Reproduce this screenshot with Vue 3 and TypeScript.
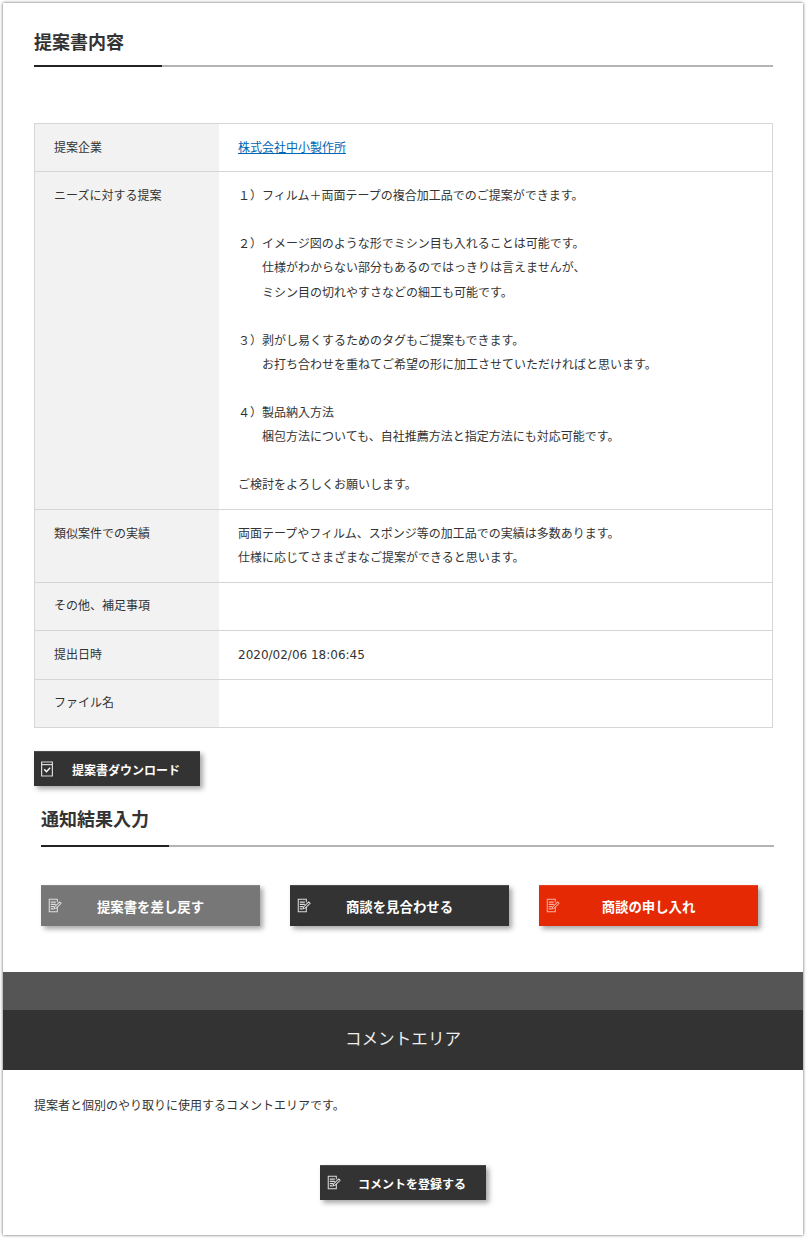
<script setup lang="ts">
interface Row { label: string; lines?: string[]; link?: string }
const rows: Row[] = [
  { label: '提案企業', link: '株式会社中小製作所' },
  { label: 'ニーズに対する提案', lines: [
    '１）フィルム＋両面テープの複合加工品でのご提案ができます。', '',
    '２）イメージ図のような形でミシン目も入れることは可能です。',
    '　　仕様がわからない部分もあるのではっきりは言えませんが、',
    '　　ミシン目の切れやすさなどの細工も可能です。', '',
    '３）剥がし易くするためのタグもご提案もできます。',
    '　　お打ち合わせを重ねてご希望の形に加工させていただければと思います。', '',
    '４）製品納入方法',
    '　　梱包方法についても、自社推薦方法と指定方法にも対応可能です。', '',
    'ご検討をよろしくお願いします。'] },
  { label: '類似案件での実績', lines: ['両面テープやフィルム、スポンジ等の加工品での実績は多数あります。', '仕様に応じてさまざまなご提案ができると思います。'] },
  { label: 'その他、補足事項', lines: [''] },
  { label: '提出日時', lines: ['2020/02/06 18:06:45'] },
  { label: 'ファイル名', lines: [''] },
]
const actions = [
  { label: '提案書を差し戻す', cls: 'gray' },
  { label: '商談を見合わせる', cls: 'dark' },
  { label: '商談の申し入れ', cls: 'red' },
]
</script>

<template>
  <div class="frame">
    <section class="content">
      <h2 class="heading">提案書内容</h2>
      <table class="info">
        <tbody>
          <tr v-for="r in rows" :key="r.label">
            <th>{{ r.label }}</th>
            <td>
              <a v-if="r.link" href="#">{{ r.link }}</a>
              <template v-else>
                <div v-for="(l, i) in r.lines" :key="i" class="line">{{ l || '\u00a0' }}</div>
              </template>
            </td>
          </tr>
        </tbody>
      </table>
      <button class="btn download" type="button">
        <svg class="ico" viewBox="0 0 14 16" width="14" height="16" fill="none" stroke="#d8d8d8" stroke-width="1.2">
          <path d="M1.6 1h10.8v14H1.6z" />
          <path d="M1.6 3.6h10.8" />
          <path d="M4.2 8.2l2.3 2.6 3.6-4" stroke="#fff" stroke-width="1.4" />
        </svg>
        <span>提案書ダウンロード</span>
      </button>
    </section>

    <section class="notify">
      <h2 class="heading">通知結果入力</h2>
      <div class="actions">
        <button v-for="a in actions" :key="a.label" class="btn action" :class="a.cls" type="button">
          <svg class="ico" viewBox="0 0 16 16" width="15" height="15" fill="none" stroke="currentColor" stroke-width="1.1">
            <path d="M11 9.5V14.6H2.4V1.4h8.6v3" />
            <path d="M4 4.4h5.4M4 6.8h5.4M4 9.2h3.6M4 11.6h3" />
            <path d="M7.6 11.6l.5-2 5.4-5.4 1.5 1.5-5.4 5.4z" />
          </svg>
          <span>{{ a.label }}</span>
        </button>
      </div>
    </section>

    <div class="band"></div>
    <h2 class="comment-title">コメントエリア</h2>
    <section class="comment">
      <p>提案者と個別のやり取りに使用するコメントエリアです。</p>
      <button class="btn submit" type="button">
        <svg class="ico" viewBox="0 0 16 16" width="15" height="15" fill="none" stroke="currentColor" stroke-width="1.1">
          <path d="M11 9.5V14.6H2.4V1.4h8.6v3" />
          <path d="M4 4.4h5.4M4 6.8h5.4M4 9.2h3.6M4 11.6h3" />
          <path d="M7.6 11.6l.5-2 5.4-5.4 1.5 1.5-5.4 5.4z" />
        </svg>
        <span>コメントを登録する</span>
      </button>
    </section>
  </div>
</template>

<style>
html, body { margin: 0; background: #fff; }
</style>

<style scoped>
.frame {
  box-sizing: border-box;
  width: 800px;
  height: 1232px;
  margin: 3px;
  background: #fff;
  box-shadow: 0 0 3px rgba(0, 0, 0, 0.65);
  color: #333;
  font-family: "DejaVu Sans", "Noto Sans CJK JP", sans-serif;
  font-size: 12px;
  overflow: hidden;
}
.content { padding: 0 30px 0 31px; }
.heading {
  margin: 0;
  height: 64px;
  box-sizing: border-box;
  padding-top: 27px;
  font-size: 18px;
  line-height: 26px;
  font-weight: 700;
  color: #333;
  border-bottom: 2px solid #b4b4b4;
  position: relative;
}
.heading::after {
  content: "";
  position: absolute;
  left: 0;
  bottom: -2px;
  width: 128px;
  height: 2px;
  background: #222;
}
.info {
  width: 739px;
  margin-top: 56px;
  border-collapse: collapse;
  table-layout: fixed;
}
.info th, .info td {
  border: 1px solid #d6d6d6;
  padding: 11.7px 19px;
  font-weight: 400;
  line-height: 24.1px;
  text-align: left;
  vertical-align: top;
}
.info th { width: 146px; background: #f2f2f2; border-right: 0; }
.info td { border-left: 0; }
.info a { color: #0066b3; }
.line { white-space: pre; }
.btn {
  display: flex;
  align-items: center;
  box-sizing: border-box;
  border: 0;
  border-top: 1px solid rgba(255,255,255,0.12);
  padding: 0;
  color: #fff;
  background: #333;
  font-family: inherit;
  font-weight: 700;
  box-shadow: 3px 3px 5px rgba(0, 0, 0, 0.35);
  position: relative;
}
.ico { position: absolute; flex: none; color: #ddd; }
.download { width: 166px; height: 35px; margin-top: 23px; font-size: 12px; }
.download .ico { left: 6px; top: 9px; }
.download span { margin-left: 38px; }
.notify { padding: 0 29px 0 38px; margin-top: -1px; }
.notify .heading { padding-top: 22px; height: 62px; }
.actions { display: flex; gap: 30px; margin-top: 38px; }
.action { width: 219px; height: 41px; justify-content: center; font-size: 13.4px; }
.action .ico { left: 6px; top: 12px; }
.gray { background: #777; }
.dark { background: #333; }
.red { background: #e62905; }
.red .ico { color: #f7b0a0; }
.band {
  height: 38px;
  margin-top: 46px;
  background: #555;
}
.comment-title {
  margin: 0;
  height: 60px;
  background: #333;
  color: #eee;
  font-size: 16.6px;
  font-weight: 400;
  line-height: 60px;
  text-align: center;
}
.comment { padding: 24px 31px 0; }
.comment p { margin: 0; line-height: 24px; }
.submit {
  width: 166px;
  height: 35px;
  margin: 47px auto 0;
  font-size: 12px;
}
.submit .ico { left: 6px; top: 9px; }
.submit span { margin-left: 38px; }
</style>
